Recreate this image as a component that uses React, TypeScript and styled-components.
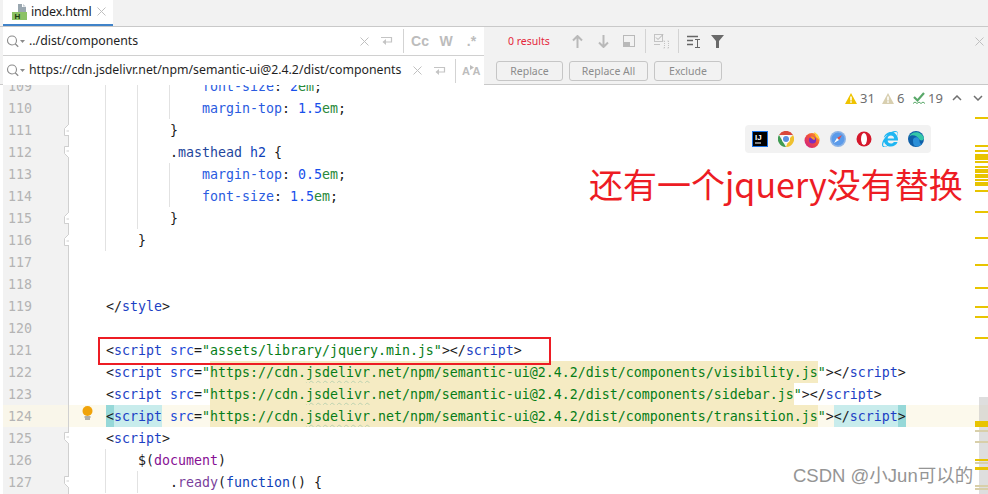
import React from "react";
import styled, { createGlobalStyle } from "styled-components";
import { FaInternetExplorer } from "react-icons/fa";

const Global = createGlobalStyle`
  html, body { margin: 0; padding: 0; background: #fff; overflow: hidden; }
  * { box-sizing: border-box; }
`;

const UI_FONT = `"Noto Sans", "Liberation Sans", sans-serif`;

const Page = styled.div`
  width: 988px;
  height: 494px;
  display: flex;
  flex-direction: column;
  overflow: hidden;
  font-family: ${UI_FONT};
  background: #fff;
`;

const TabStrip = styled.div`
  height: 27px;
  flex: none;
  display: flex;
  padding-left: 3px;
  background: #f2f2f2;
  border-bottom: 1px solid #c9c9c9;
`;

const Tab = styled.div`
  width: 110px;
  height: 26px;
  display: flex;
  align-items: center;
  padding: 0 0 2px 9px;
  background: #fff;
  border-bottom: 2px solid #4083c9;
`;

const TabName = styled.span`
  margin-left: 3px;
  width: 66px;
  font-size: 12.5px;
  letter-spacing: -0.2px;
  color: #1c1c1c;
`;

const FindBar = styled.div`
  height: 58px;
  flex: none;
  display: grid;
  grid-template-columns: 494px 1fr;
  grid-template-rows: 29px 29px;
  background: #f2f2f2;
  border-bottom: 1px solid #c9c9c9;
`;

const Field = styled.div`
  display: flex;
  align-items: center;
  margin-left: 3px;
  width: 481px;
  background: #fff;
  border-bottom: 1px solid #d0d0d0;
  &:nth-of-type(3) { border-bottom: none; }
`;

const FieldGlass = styled.div`
  width: 26px;
  padding-left: 3px;
  display: flex;
  align-items: center;
  flex: none;
`;

const FieldText = styled.div`
  flex: 1;
  margin-top: -2px;
  font-size: 12.3px;
  color: #1f1f1f;
  white-space: nowrap;
`;

const Slot = styled.div<{ $w: number }>`
  width: ${(p) => p.$w}px;
  height: 100%;
  flex: none;
  display: flex;
  align-items: center;
  justify-content: center;
`;

const Divider = styled.div`
  width: 1px;
  height: 24px;
  flex: none;
  background: #d3d3d3;
`;

const Toggle = styled.span`
  font-family: "Liberation Sans", sans-serif;
  font-size: 14px;
  font-weight: 700;
  color: #bcbcbc;
`;

const SmallToggle = styled.span`
  font-family: "Liberation Sans", sans-serif;
  font-size: 11px;
  font-weight: 700;
  letter-spacing: 0.5px;
  color: #bdbdbd;
`;

const ResultRow = styled.div`
  display: flex;
  align-items: center;
  padding-left: 14px;
  padding-bottom: 1px;
`;

const Results = styled.div`
  width: 56px;
  flex: none;
  font-size: 10.5px;
  color: #e5283c;
`;

const CloseSlot = styled.div`
  margin-left: auto;
  width: 18px;
  display: flex;
  justify-content: center;
`;

const ButtonRow = styled.div`
  display: flex;
  align-items: center;
  gap: 6px;
  padding: 1px 0 0 2px;
`;

const ReplaceButton = styled.div<{ $w: number }>`
  width: ${(p) => p.$w}px;
  height: 20px;
  display: flex;
  align-items: center;
  justify-content: center;
  border: 1px solid #c6c6c6;
  border-radius: 3px;
  font-size: 10.5px;
  color: #8c8c8c;
  background: #f2f2f2;
`;

const Editor = styled.div`
  position: relative;
  flex: 1;
  overflow: hidden;
  background: #fff;
`;

const LineList = styled.div`
  margin-top: -10px;
  font-family: "DejaVu Sans Mono", "Liberation Mono", monospace;
  font-size: 13.29px;
`;

const Row = styled.div`
  display: flex;
  height: 22px;
  line-height: 24px;
`;

const LeftStrip = styled.div`
  width: 3px;
  flex: none;
`;

const Gutter = styled.div<{ $active?: boolean }>`
  position: relative;
  width: 66px;
  flex: none;
  padding-left: 5px;
  color: #b4b4b4;
  background: ${(p) => (p.$active ? "#f9f6ea" : "#f2f2f2")};
  border-right: 1px solid #d0d0d0;
`;

const FoldMark = styled.svg`
  position: absolute;
  right: -5px;
  top: 5px;
`;

const CodeCell = styled.div<{ $active?: boolean }>`
  position: relative;
  flex: 1;
  padding-left: 37px;
  white-space: pre;
  background: ${(p) => (p.$active ? "#fcf9ec" : "#fff")};
`;

const Guide = styled.i<{ $col: number }>`
  position: absolute;
  top: 0;
  bottom: 0;
  left: ${(p) => 36 + p.$col * 8}px;
  width: 1px;
  background: #e2e2e2;
`;

const BulbBox = styled.svg`
  position: absolute;
  left: 13px;
  top: 1px;
`;

const kindColor: Record<string, string> = {
  plain: "#1a1a1a",
  tag: "#1c3fc4",
  attr: "#2148d6",
  str: "#067d17",
  prop: "#2a5be0",
  num: "#1750eb",
  unit: "#2a8a3a",
  cls: "#24469c",
  purple: "#871094",
  fn: "#7a3f9c",
  key: "#0f3fb8",
};

const kindBg: Record<string, string> = {
  none: "transparent",
  url: "#f5ebc3",
  match: "#c8ecec",
  matchEdge: "#96d8d8",
};

const Tok = styled.span<{ $k: string; $bg?: string; $wave?: boolean }>`
  color: ${(p) => kindColor[p.$k]};
  background: ${(p) => kindBg[p.$bg || "none"]};
  display: inline-block;
  height: 22px;
  vertical-align: top;
  ${(p) =>
    p.$wave
      ? "text-decoration: underline wavy #bcd2b0 1px; text-underline-offset: 3px;"
      : ""}
`;

const Overlay = styled.div`
  position: absolute;
  pointer-events: none;
`;

const Inspections = styled(Overlay)`
  top: 5px;
  left: 845px;
  display: flex;
  align-items: center;
  height: 16px;
  font-size: 13px;
  color: #6e6e6e;
`;

const InspectCount = styled.span<{ $w: number }>`
  width: ${(p) => p.$w}px;
  padding-left: 3px;
  flex: none;
`;

const Dock = styled(Overlay)`
  top: 40px;
  left: 745px;
  width: 186px;
  height: 28px;
  display: flex;
  align-items: center;
  justify-content: space-between;
  padding: 0 7px;
  background: #f2f2f2;
  border-radius: 4px;
`;

const Annotation = styled(Overlay)`
  top: 75px;
  left: 589px;
  font-family: "Noto Sans CJK SC", "Noto Sans", sans-serif;
  font-size: 34px;
  line-height: 48px;
  font-weight: 400;
  color: #ed1c24;
  white-space: nowrap;
`;

const RedBox = styled(Overlay)`
  top: 252px;
  left: 98px;
  width: 453px;
  height: 28px;
  border: 2px solid #ed1c24;
`;

const Watermark = styled(Overlay)`
  top: 378px;
  left: 793px;
  font-family: "Liberation Sans", "Noto Sans CJK SC", sans-serif;
  font-size: 18.5px;
  line-height: 26px;
  color: #959595;
  text-shadow: 0 0 1px #fff;
  white-space: nowrap;
`;

const Thumb = styled(Overlay)`
  top: 312px;
  right: 0;
  width: 9px;
  height: 97px;
  background: rgba(190, 190, 190, 0.5);
`;

const Stripe = styled(Overlay)<{ $y: number; $h: number; $tan?: boolean }>`
  top: ${(p) => p.$y - 85}px;
  right: 0;
  width: 13px;
  height: ${(p) => p.$h}px;
  background: ${(p) => (p.$tan ? "#d8cfa9" : "#e8c400")};
`;

/* ---------- icons ---------- */

const HtmlFileIcon = () => (
  <svg width="16" height="17" viewBox="0 0 16 17">
    <path d="M6 1h4v3h4v6H6z" fill="#9aa7b0" />
    <path d="M11 1l3 2.5h-3z" fill="#c4ccd2" />
    <rect x="0" y="9" width="15" height="8" fill="#8cc265" />
    <text x="2.5" y="16" fontSize="8" fontWeight="700" fontFamily="Liberation Sans" fill="#1f3d12">H</text>
  </svg>
);

const CloseX = ({ c = "#c0c0c0", s = 9 }: { c?: string; s?: number }) => (
  <svg width={s} height={s} viewBox="0 0 9 9">
    <path d="M.5.5l8 8M8.5.5l-8 8" stroke={c} strokeWidth="1" fill="none" />
  </svg>
);

const SearchGlass = () => (
  <svg width="19" height="13" viewBox="0 0 19 13">
    <circle cx="6" cy="5.5" r="4.5" fill="none" stroke="#8b8b8b" strokeWidth="1.1" />
    <path d="M9.2 8.8l3 3" stroke="#8b8b8b" strokeWidth="1.3" />
    <path d="M14 5h5l-2.5 3z" fill="#8b8b8b" />
  </svg>
);

const ReturnIcon = () => (
  <svg width="13" height="12" viewBox="0 0 13 12">
    <path d="M1 2.5h10.5v4.5H3.5" fill="none" stroke="#c4c4c4" strokeWidth="1.2" />
    <path d="M6 4L2.5 7 6 10z" fill="#c4c4c4" />
  </svg>
);

const ArrowIcon = ({ down }: { down?: boolean }) => (
  <svg width="11" height="13" viewBox="0 0 11 13" style={down ? { transform: "rotate(180deg)" } : undefined}>
    <path d="M5.5 1v12M1 5.5L5.5 1 10 5.5" fill="none" stroke="#b9b9b9" strokeWidth="2" />
  </svg>
);

const HalfBoxIcon = () => (
  <svg width="12" height="12" viewBox="0 0 12 12">
    <rect x=".5" y=".5" width="11" height="11" fill="none" stroke="#b9b9b9" />
    <rect x="1" y="7" width="6" height="4" fill="#b9b9b9" />
  </svg>
);

const SelectionIcon = () => (
  <svg width="16" height="15" viewBox="0 0 16 15">
    <rect x=".5" y=".5" width="8" height="7" fill="none" stroke="#c4c4c4" />
    <path d="M2 3.5l2 2 5-5" fill="none" stroke="#b0b0b0" />
    <path d="M0 10.5h6" stroke="#c4c4c4" />
    <path d="M9.5 7h2M9.5 14h2M10.5 7v7M13.5 7h2M13.5 14h2M14.5 7v7" stroke="#c4c4c4" strokeDasharray="1 1" />
  </svg>
);

const ListCursorIcon = () => (
  <svg width="14" height="13" viewBox="0 0 14 13">
    <path d="M0 1.5h11M0 5.5h6M0 9.5h6" stroke="#666" strokeWidth="1.6" />
    <path d="M8 4.5h5M8 12.5h5M10.5 4.5v8" stroke="#666" strokeWidth="1" />
  </svg>
);

const FilterIcon = () => (
  <svg width="13" height="13" viewBox="0 0 13 13">
    <path d="M0 0h13L8 6v7H5V6z" fill="#6a6a6a" />
  </svg>
);

const AaIcon = () => (
  <svg width="4" height="5" viewBox="0 0 4 5" style={{ marginBottom: 7, marginLeft: -1, marginRight: -1 }}>
    <path d="M0 0l4 2.5L0 5z" fill="#bdbdbd" />
  </svg>
);

const FoldIcon = ({ kind }: { kind: "open" | "end" }) => (
  <FoldMark width="9" height="12" viewBox="0 0 9 12">
    <path
      d={kind === "open" ? "M.5.5h8v7l-4 4-4-4z" : "M.5 11.5h8v-7l-4-4-4 4z"}
      fill="#fff"
      stroke="#cfcfcf"
    />
    <path d={kind === "open" ? "M2.5 5h4" : "M2.5 7h4"} stroke="#cfcfcf" />
  </FoldMark>
);

const Bulb = () => (
  <BulbBox width="11" height="15" viewBox="0 0 11 15">
    <circle cx="5.5" cy="5" r="5" fill="#f0a30a" />
    <path d="M2.5 11h6" stroke="#666" strokeWidth="1" />
    <path d="M3 13h5" stroke="#666" strokeWidth="1" />
  </BulbBox>
);

const WarnIcon = ({ c }: { c: string }) => (
  <svg width="12" height="11" viewBox="0 0 12 11">
    <path d="M6 0l6 11H0z" fill={c} />
    <path d="M5.2 3.5h1.6v4H5.2zM5.2 8.3h1.6v1.5H5.2z" fill="#fff" />
  </svg>
);

const CheckIcon = () => (
  <svg width="12" height="13" viewBox="0 0 12 13">
    <path d="M1 5l3.5 3.5L11 1" fill="none" stroke="#59a869" strokeWidth="2.2" />
    <path d="M0 11.5l2-1.5 2 1.5 2-1.5 2 1.5 2-1.5 2 1.5" fill="none" stroke="#59a869" strokeWidth="1" />
  </svg>
);

const Chevron = ({ down }: { down?: boolean }) => (
  <svg width="10" height="6" viewBox="0 0 10 6">
    <path d={down ? "M1 1l4 4 4-4" : "M1 5l4-4 4 4"} fill="none" stroke="#707070" strokeWidth="1.5" />
  </svg>
);

const IdeaLogo = () => (
  <svg width="16" height="16" viewBox="0 0 16 16">
    <rect x=".5" y=".5" width="15" height="15" fill="#000" stroke="#1a73e8" />
    <text x="3" y="9" fontSize="8" fontWeight="700" fontFamily="Liberation Sans" fill="#fff">IJ</text>
    <rect x="3" y="11.5" width="6" height="1" fill="#fff" />
  </svg>
);

const ChromeLogo = () => (
  <svg width="16" height="16" viewBox="0 0 16 16">
    <path d="M1 4a8 8 0 0 1 14 0H8z" fill="#d9483b" />
    <path d="M15 4a8 8 0 0 1-7 12l3-8z" fill="#efc12f" />
    <path d="M8 16A8 8 0 0 1 1 4l4 7z" fill="#3f9b52" />
    <circle cx="8" cy="8" r="4" fill="#fff" />
    <circle cx="8" cy="8" r="3" fill="#5a8fe0" />
  </svg>
);

const FirefoxLogo = () => (
  <svg width="16" height="17" viewBox="0 0 16 17">
    <defs>
      <linearGradient id="ffg" x1="0" y1="1" x2="1" y2="0">
        <stop offset="0" stopColor="#c9188f" />
        <stop offset="0.55" stopColor="#f2503c" />
        <stop offset="1" stopColor="#ffb224" />
      </linearGradient>
    </defs>
    <circle cx="8" cy="9.5" r="7.5" fill="url(#ffg)" />
    <path d="M10 1c4 2 5.5 5 5.5 8L12 6z" fill="#ffd23a" />
    <circle cx="8.5" cy="9" r="3.6" fill="#7b2fc0" />
    <path d="M6 6c2-1.5 5-.5 5 2 0 1-1 1-2 .5z" fill="#ff9a1f" />
  </svg>
);

const SafariLogo = () => (
  <svg width="16" height="16" viewBox="0 0 16 16">
    <circle cx="8" cy="8" r="8" fill="#8db4e6" />
    <circle cx="8" cy="8" r="6.5" fill="#5b9bea" />
    <path d="M12 4L9 9 7 7z" fill="#e8493f" />
    <path d="M4 12l3-5 2 2z" fill="#fff" />
  </svg>
);

const OperaLogo = () => (
  <svg width="16" height="16" viewBox="0 0 16 16">
    <circle cx="8" cy="8" r="7.5" fill="#d5182c" />
    <ellipse cx="8" cy="8" rx="3" ry="6" fill="#fff" />
  </svg>
);

const EdgeLogo = () => (
  <svg width="16" height="16" viewBox="0 0 16 16">
    <circle cx="8" cy="8" r="8" fill="#0e5fa8" />
    <path d="M1 6C3 0 13-1 16 7c0 3-4 3-5 1-2-4-8-5-10-2z" fill="#34c6a8" />
    <path d="M5 9c0-3 5-4 6-1 1 2 0 5 3 5-2 2-5 3-7 2-2-1-2-4-2-6z" fill="#2a8fd8" />
  </svg>
);

/* ---------- code ---------- */

type T = [string, string, string?, boolean?];
interface L { n: number; g?: number[]; f?: "open" | "end"; t: T[]; active?: boolean; bulb?: boolean }

const sp = (n: number): T => [" ".repeat(n), "plain"];

const scriptUrl = (file: string): T[] => [
  ["https://cdn.", "str", "url"],
  ["jsdelivr", "str", "url", true],
  [`.net/npm/semantic-ui@2.4.2/dist/components/${file}.js`, "str", "url"],
];

const LINES: L[] = [
  { n: 109, g: [0, 4, 8], t: [sp(12), ["font-size", "prop"], [": ", "plain"], ["2", "num"], ["em", "unit"], [";", "plain"]] },
  { n: 110, g: [0, 4, 8], t: [sp(12), ["margin-top", "prop"], [": ", "plain"], ["1.5", "num"], ["em", "unit"], [";", "plain"]] },
  { n: 111, g: [0, 4], f: "end", t: [sp(8), ["}", "plain"]] },
  { n: 112, g: [0, 4], f: "open", t: [sp(8), [".", "plain"], ["masthead", "cls"], [" ", "plain"], ["h2", "key"], [" {", "plain"]] },
  { n: 113, g: [0, 4, 8], t: [sp(12), ["margin-top", "prop"], [": ", "plain"], ["0.5", "num"], ["em", "unit"], [";", "plain"]] },
  { n: 114, g: [0, 4, 8], t: [sp(12), ["font-size", "prop"], [": ", "plain"], ["1.5", "num"], ["em", "unit"], [";", "plain"]] },
  { n: 115, g: [0, 4], f: "end", t: [sp(8), ["}", "plain"]] },
  { n: 116, g: [0], f: "end", t: [sp(4), ["}", "plain"]] },
  { n: 117, t: [] },
  { n: 118, t: [] },
  { n: 119, t: [["</", "plain"], ["style", "tag"], [">", "plain"]] },
  { n: 120, t: [] },
  { n: 121, t: [["<", "plain"], ["script", "tag"], [" ", "plain"], ["src", "attr"], ["=", "plain"], ['"assets/library/jquery.min.js"', "str"], ["></", "plain"], ["script", "tag"], [">", "plain"]] },
  { n: 122, t: [["<", "plain"], ["script", "tag"], [" ", "plain"], ["src", "attr"], ["=", "plain"], ['"', "str"], ...scriptUrl("visibility"), ['"', "str"], ["></", "plain"], ["script", "tag"], [">", "plain"]] },
  { n: 123, t: [["<", "plain"], ["script", "tag"], [" ", "plain"], ["src", "attr"], ["=", "plain"], ['"', "str"], ...scriptUrl("sidebar"), ['"', "str"], ["></", "plain"], ["script", "tag"], [">", "plain"]] },
  { n: 124, active: true, bulb: true, t: [["<", "plain", "matchEdge"], ["script", "tag", "match"], [" ", "plain"], ["src", "attr"], ["=", "plain"], ['"', "str"], ...scriptUrl("transition"), ['"', "str"], [">", "plain"], ["</", "plain", "match"], ["script", "tag", "match"], [">", "plain", "matchEdge"]] },
  { n: 125, f: "open", t: [["<", "plain"], ["script", "tag"], [">", "plain"]] },
  { n: 126, g: [0], t: [sp(4), ["$", "plain"], ["(", "plain"], ["document", "purple"], [")", "plain"]] },
  { n: 127, g: [0, 4], f: "open", t: [sp(8), [".", "plain"], ["ready", "fn"], ["(", "plain"], ["function", "key"], ["() {", "plain"]] },
  { n: 128, t: [] },
];

const STRIPES: { y: number; h: number; tan?: boolean }[] = [
  { y: 117, h: 2 }, { y: 145, h: 2 }, { y: 150, h: 2 }, { y: 154, h: 4 }, { y: 158, h: 2 },
  { y: 161, h: 2 }, { y: 166, h: 2 }, { y: 169, h: 4 }, { y: 174, h: 4 }, { y: 179, h: 2 },
  { y: 182, h: 4 }, { y: 190, h: 2 }, { y: 211, h: 2 }, { y: 237, h: 2 }, { y: 264, h: 2 },
  { y: 287, h: 2 }, { y: 306, h: 2 }, { y: 316, h: 2 }, { y: 337, h: 2 },
  { y: 421, h: 4 }, { y: 425, h: 2 }, { y: 430, h: 2, tan: true }, { y: 441, h: 2, tan: true },
  { y: 459, h: 2 }, { y: 462, h: 2, tan: true }, { y: 467, h: 3 }, { y: 485, h: 2, tan: true },
  { y: 488, h: 2, tan: true },
];

export default function App() {
  return (
    <Page>
      <Global />
      <TabStrip>
        <Tab>
          <HtmlFileIcon />
          <TabName>index.html</TabName>
          <CloseX />
        </Tab>
      </TabStrip>

      <FindBar>
        <Field>
          <FieldGlass><SearchGlass /></FieldGlass>
          <FieldText>../dist/components</FieldText>
          <Slot $w={22}><CloseX /></Slot>
          <Slot $w={22}><ReturnIcon /></Slot>
          <Slot $w={6} />
          <Divider />
          <Slot $w={3} />
          <Slot $w={26}><Toggle>Cc</Toggle></Slot>
          <Slot $w={26}><Toggle>W</Toggle></Slot>
          <Slot $w={25}><Toggle>.*</Toggle></Slot>
        </Field>
        <ResultRow>
          <Results>0 results</Results>
          <Slot $w={26}><ArrowIcon /></Slot>
          <Slot $w={26}><ArrowIcon down /></Slot>
          <Slot $w={26}><HalfBoxIcon /></Slot>
          <Slot $w={3} />
          <Divider />
          <Slot $w={3} />
          <Slot $w={26}><SelectionIcon /></Slot>
          <Slot $w={3} />
          <Divider />
          <Slot $w={3} />
          <Slot $w={23}><ListCursorIcon /></Slot>
          <Slot $w={25}><FilterIcon /></Slot>
          <CloseSlot><CloseX /></CloseSlot>
        </ResultRow>
        <Field>
          <FieldGlass><SearchGlass /></FieldGlass>
          <FieldText>https://cdn.jsdelivr.net/npm/semantic-ui@2.4.2/dist/components</FieldText>
          <Slot $w={22}><CloseX /></Slot>
          <Slot $w={22}><ReturnIcon /></Slot>
          <Slot $w={5} />
          <Divider />
          <Slot $w={3} />
          <Slot $w={25}>
            <SmallToggle>A</SmallToggle>
            <AaIcon />
            <SmallToggle>A</SmallToggle>
          </Slot>
        </Field>
        <ButtonRow>
          <ReplaceButton $w={67}>Replace</ReplaceButton>
          <ReplaceButton $w={79}>Replace All</ReplaceButton>
          <ReplaceButton $w={68}>Exclude</ReplaceButton>
        </ButtonRow>
      </FindBar>

      <Editor>
        <LineList>
          {LINES.map((l) => (
            <Row key={l.n}>
              <LeftStrip />
              <Gutter $active={l.active}>
                {l.n === 128 ? "" : l.n}
                {l.f && <FoldIcon kind={l.f} />}
              </Gutter>
              <CodeCell $active={l.active}>
                {l.g?.map((c) => <Guide key={c} $col={c} />)}
                {l.bulb && <Bulb />}
                {l.t.map((t, i) => (
                  <Tok key={i} $k={t[1]} $bg={t[2]} $wave={t[3]}>{t[0]}</Tok>
                ))}
              </CodeCell>
            </Row>
          ))}
        </LineList>

        <Inspections>
          <WarnIcon c="#efc300" />
          <InspectCount $w={25}>31</InspectCount>
          <WarnIcon c="#d8cfb0" />
          <InspectCount $w={19}>6</InspectCount>
          <CheckIcon />
          <InspectCount $w={27}>19</InspectCount>
          <Slot $w={10}><Chevron /></Slot>
          <Slot $w={11} />
          <Slot $w={10}><Chevron down /></Slot>
        </Inspections>

        <Dock>
          <IdeaLogo />
          <ChromeLogo />
          <FirefoxLogo />
          <SafariLogo />
          <OperaLogo />
          <FaInternetExplorer size={16} color="#1fb6f2" />
          <EdgeLogo />
        </Dock>

        <Annotation>还有一个jquery没有替换</Annotation>
        <RedBox />
        <Thumb />
        {STRIPES.map((s, i) => (
          <Stripe key={i} $y={s.y} $h={s.h} $tan={s.tan} />
        ))}
        <Watermark>CSDN @小Jun可以的</Watermark>
      </Editor>
    </Page>
  );
}
